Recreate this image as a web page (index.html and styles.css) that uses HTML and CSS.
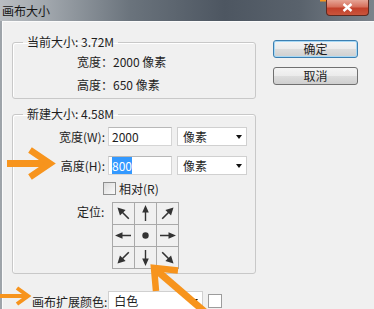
FILE: index.html
```html
<!DOCTYPE html>
<html lang="zh-CN">
<head>
    <meta charset="UTF-8">
    <title>画布大小</title>
    <link rel="stylesheet" href="styles.css">
</head>
<body>

    <div class="window">
        <!-- Başlık çubuğu -->
        <div class="titlebar">
            <span class="title">画布大小</span>
            <div class="close-btn">
                <svg width="11" height="9" viewBox="0 0 11 9"><path d="M1.5 1 L9.5 8 M9.5 1 L1.5 8" stroke="#fff" stroke-width="2.4"/></svg>
            </div>
        </div>

        <div class="dialog">
            <div class="main">
                <fieldset class="group group-current">
                    <legend>当前大小: 3.72M</legend>
                    <div class="info-row">宽度：2000 像素</div>
                    <div class="info-row">高度：650 像素</div>
                </fieldset>

                <fieldset class="group group-new">
                    <legend>新建大小: 4.58M</legend>
                    <div class="field-row">
                        <span class="field-label">宽度(W):</span>
                        <div class="text-box">2000</div>
                        <div class="combo">像素<span class="caret"></span></div>
                    </div>
                    <div class="field-row">
                        <span class="field-label">高度(H):</span>
                        <div class="text-box"><span class="selected">800</span></div>
                        <div class="combo">像素<span class="caret"></span></div>
                    </div>
                    <div class="check-row">
                        <span class="checkbox"></span>相对(R)
                    </div>
                    <div class="anchor-row">
                        <span class="anchor-label">定位:</span>
                        <div class="anchor-grid">
                            <div class="cell"><svg viewBox="0 0 21 21"><path class="arr" transform="rotate(-45 10.5 10.5)" d="M10.5 2 L14.5 9.5 L11.3 9.5 L11.3 18 L9.7 18 L9.7 9.5 L6.5 9.5 Z"/></svg></div>
                            <div class="cell"><svg viewBox="0 0 21 21"><path class="arr" d="M10.5 2 L13.8 9.5 L11.2 9.5 L11.2 18 L9.8 18 L9.8 9.5 L7.2 9.5 Z"/></svg></div>
                            <div class="cell"><svg viewBox="0 0 21 21"><path class="arr" transform="rotate(45 10.5 10.5)" d="M10.5 2 L14.5 9.5 L11.3 9.5 L11.3 18 L9.7 18 L9.7 9.5 L6.5 9.5 Z"/></svg></div>
                            <div class="cell"><svg viewBox="0 0 21 21"><path class="arr" transform="rotate(-90 10.5 10.5)" d="M10.5 2 L13.8 9.5 L11.2 9.5 L11.2 18 L9.8 18 L9.8 9.5 L7.2 9.5 Z"/></svg></div>
                            <div class="cell"><svg viewBox="0 0 21 21"><circle class="arr" cx="10.5" cy="10.5" r="3.2"/></svg></div>
                            <div class="cell"><svg viewBox="0 0 21 21"><path class="arr" transform="rotate(90 10.5 10.5)" d="M10.5 2 L13.8 9.5 L11.2 9.5 L11.2 18 L9.8 18 L9.8 9.5 L7.2 9.5 Z"/></svg></div>
                            <div class="cell"><svg viewBox="0 0 21 21"><path class="arr" transform="rotate(-135 10.5 10.5)" d="M10.5 2 L14.5 9.5 L11.3 9.5 L11.3 18 L9.7 18 L9.7 9.5 L6.5 9.5 Z"/></svg></div>
                            <div class="cell"><svg viewBox="0 0 21 21"><path class="arr" transform="rotate(180 10.5 10.5)" d="M10.5 2 L13.8 9.5 L11.2 9.5 L11.2 18 L9.8 18 L9.8 9.5 L7.2 9.5 Z"/></svg></div>
                            <div class="cell"><svg viewBox="0 0 21 21"><path class="arr" transform="rotate(135 10.5 10.5)" d="M10.5 2 L14.5 9.5 L11.3 9.5 L11.3 18 L9.7 18 L9.7 9.5 L6.5 9.5 Z"/></svg></div>
                        </div>
                    </div>
                </fieldset>

                <div class="ext-row">
                    <span class="ext-label">画布扩展颜色:</span>
                    <div class="combo combo-wide">白色<span class="caret"></span></div>
                    <span class="swatch"></span>
                </div>
            </div>

            <div class="buttons">
                <div class="btn btn-default">确定</div>
                <div class="btn">取消</div>
            </div>
        </div>

        <!-- Turuncu işaret okları -->
        <svg class="marks" width="374" height="309" viewBox="0 0 374 309">
            <g fill="none" stroke="#f7941d" stroke-linejoin="miter" stroke-miterlimit="10">
                <path d="M7 163.5 L47 163.5" stroke-width="7"/>
                <path d="M30 150 L50 163.5 L30 177" stroke-width="6.5"/>
                <path d="M0 296 L26 296" stroke-width="4"/>
                <path d="M17 288 L28 296 L17 304" stroke-width="4"/>
                <path d="M155 269 L205 312" stroke-width="7"/>
                <path d="M178 270.5 L154 268 L156 291" stroke-width="6.5"/>
                <path d="M320 0 L326 0" stroke-width="3"/>
            </g>
        </svg>
    </div>

</body>
</html>
```

FILE: styles.css
```css
body {
    margin: 0;
    font-family: "Noto Sans CJK SC", "Noto Sans", sans-serif;
    font-size: 12px;
    color: #1e1e1e;
}

.window {
    position: relative;
    width: 374px;
    height: 309px;
    overflow: hidden;
    background: linear-gradient(to right, #9ea4aa, #8c939a 60%, #a3a8ad);
}

/* Başlık çubuğu (Win7 aero) */
.titlebar {
    height: 21px;
    display: flex;
    align-items: flex-start;
    background: linear-gradient(to right, #b9bdc1 0%, #a2a8ae 12%, #6a737c 35%, #4d5661 60%, #59626c 80%, #7b838b 100%);
}

.title {
    padding-left: 2px;
    line-height: 21px;
    font-size: 12px;
    color: #161616;
}

.close-btn {
    margin-left: auto;
    margin-right: 5px;
    width: 41px;
    height: 15px;
    border: 1px solid #5e2a20;
    border-top: none;
    border-radius: 0 0 4px 4px;
    background: linear-gradient(to bottom, #e6a596 0%, #d6705c 45%, #c2402a 55%, #c9553c 100%);
    display: flex;
    justify-content: center;
    align-items: center;
}

.dialog {
    margin-left: 2px;
    width: 364px;
    height: 290px;
    border: 1px solid #fbfbfb;
    border-right-color: #7d8389;
    background: #f0f0f0;
    display: flex;
    padding: 13px 0 0 9px;
}

.main {
    width: 244px;
}

.group {
    margin: 0;
    padding: 0;
    border: 1px solid #c8c8c8;
    border-radius: 3px;
    box-shadow: inset 1px 1px 0 #fff;
    width: 244px;
    box-sizing: border-box;
}

.group legend {
    margin-left: 10px;
    padding: 0 4px;
    line-height: 14px;
}

.group-current {
    padding-top: 2px;
    height: 64px;
}

.info-row {
    height: 23px;
    line-height: 22px;
    padding-left: 64px;
}

.group-new {
    margin-top: 8px;
    height: 167px;
}

.field-row {
    display: flex;
    align-items: center;
    height: 19px;
    margin-top: 6px;
}

.field-row + .field-row {
    margin-top: 10px;
}

.field-label {
    width: 92px;
    text-align: right;
    margin-right: 3px;
}

.text-box {
    width: 64px;
    height: 19px;
    box-sizing: border-box;
    border: 1px solid #d5d5d5;
    border-top-color: #b8b8b8;
    background: #fff;
    padding-left: 3px;
    line-height: 17px;
}

.selected {
    background: #3399ff;
    color: #fff;
}

.combo {
    position: relative;
    width: 70px;
    height: 19px;
    margin-left: 5px;
    box-sizing: border-box;
    border: 1px solid #d0d0d0;
    background: #fff;
    padding-left: 5px;
    line-height: 17px;
}

.caret {
    position: absolute;
    right: 4px;
    top: 7px;
    border-left: 3.5px solid transparent;
    border-right: 3.5px solid transparent;
    border-top: 4px solid #111;
}

.check-row {
    display: flex;
    align-items: center;
    height: 13px;
    margin: 7px 0 0 90px;
}

.checkbox {
    width: 11px;
    height: 11px;
    border: 1px solid #8e8f8f;
    background: linear-gradient(135deg, #dcdcdc, #fafafa);
    margin-right: 3px;
}

.anchor-row {
    display: flex;
    margin: 7px 0 0 64px;
}

.anchor-label {
    line-height: 20px;
    width: 35px;
}

.anchor-grid {
    display: grid;
    grid-template-columns: repeat(3, 21px);
    grid-template-rows: repeat(3, 21px);
    gap: 1px;
    border: 1px solid #a9a9a9;
    background: #a9a9a9;
}

.cell {
    background: #f0f0f0;
}

.cell svg {
    display: block;
    width: 21px;
    height: 21px;
}

.arr {
    fill: #333;
}

.ext-row {
    display: flex;
    align-items: center;
    margin: 17px 0 0 20px;
}

.combo-wide {
    width: 95px;
    height: 20px;
    margin-left: 1px;
}

.swatch {
    width: 12px;
    height: 12px;
    margin-left: 5px;
    border: 1px solid #9c9c9c;
    background: #fff;
}

.buttons {
    margin-left: 17px;
    padding-top: 5px;
}

.btn {
    width: 85px;
    height: 18px;
    box-sizing: border-box;
    border: 1px solid #707070;
    border-radius: 3px;
    background: linear-gradient(to bottom, #f4f4f4 0%, #ebebeb 50%, #dddddd 51%, #cfcfcf 100%);
    text-align: center;
    line-height: 16px;
    margin-bottom: 9px;
}

.btn-default {
    border-color: #3c7fb1;
    box-shadow: inset 0 0 0 1px #a6d8f5;
}

.marks {
    position: absolute;
    left: 0;
    top: 0;
    pointer-events: none;
}
```
